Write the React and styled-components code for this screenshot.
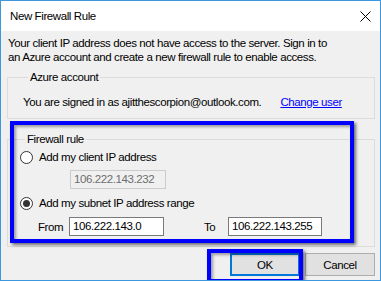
import React from "react"
import styled, { createGlobalStyle } from "styled-components"

const GlobalStyle = createGlobalStyle`
  body {
    margin: 0;
    background: #ffffff;
    font-family: "Liberation Sans", Arial, sans-serif;
    font-size: 11.5px;
    letter-spacing: -0.4px;
    color: #000000;
  }
`

const Window = styled.div`
  position: relative;
  box-sizing: border-box;
  width: 381px;
  height: 281px;
  border: 1px solid #3d97de;
  display: flex;
  flex-direction: column;
  overflow: hidden;
  background: #f0f0f0;
`

const TitleBar = styled.div`
  height: 30px;
  flex: none;
  background: #ffffff;
  display: flex;
  align-items: center;
  justify-content: space-between;
  padding: 0 9px 0 9px;
`

const Title = styled.span`
  line-height: 14px;
`

const Body = styled.div`
  flex: 1;
  display: flex;
  flex-direction: column;
  padding: 5px 5px 0 6px;
  white-space: nowrap;
`

const Message = styled.p`
  margin: 0 0 0 1px;
  line-height: 14px;
`

const Group = styled.fieldset`
  margin: ${p => p.$gap}px 0 0;
  padding: ${p => p.$pad};
  border: 1px solid #dcdcdc;
  min-width: 0;
`

const Legend = styled.legend`
  margin-left: 5px;
  padding: 0 2px;
  line-height: 14px;
`

const SignedRow = styled.div`
  display: flex;
  line-height: 14px;
`

const LinkText = styled.a`
  margin-left: 19px;
  color: #0000ff;
  text-decoration: underline;
  cursor: pointer;
`

const RadioRow = styled.label`
  display: flex;
  align-items: center;
  gap: 6px;
  line-height: 14px;
  margin-top: ${p => p.$gap || 0}px;
`

const Radio = styled.span`
  box-sizing: border-box;
  width: 13px;
  height: 13px;
  border-radius: 50%;
  border: 1px solid #333333;
  background: #ffffff;
  display: flex;
  align-items: center;
  justify-content: center;

  &::after {
    content: "";
    width: 7px;
    height: 7px;
    border-radius: 50%;
    background: #333333;
    display: ${p => (p.$checked ? "block" : "none")};
  }
`

const TextBox = styled.div`
  box-sizing: border-box;
  flex: none;
  width: ${p => p.$w}px;
  height: 19px;
  border: 1px solid ${p => (p.$disabled ? "#cccccc" : "#7a7a7a")};
  background: ${p => (p.$disabled ? "#f0f0f0" : "#ffffff")};
  color: ${p => (p.$disabled ? "#6d6d6d" : "#000000")};
  padding: 0 0 0 3px;
  line-height: 17px;
  margin: ${p => p.$margin || "0"};
`

const RangeRow = styled.div`
  display: flex;
  align-items: center;
  margin: 7px 0 0 18px;
`

const RangeLabel = styled.span`
  width: ${p => p.$w}px;
  flex: none;
  line-height: 14px;
  margin-left: ${p => p.$left || 0}px;
`

const Buttons = styled.div`
  display: flex;
  justify-content: flex-end;
  gap: 5px;
  margin-top: 6px;
`

const Button = styled.button`
  box-sizing: border-box;
  width: 70px;
  height: 23px;
  background: #e1e1e1;
  border: ${p => (p.$default ? "2px solid #0078d7" : "1px solid #adadad")};
  font-family: inherit;
  font-size: 11.5px;
  letter-spacing: inherit;
  color: #000000;
  padding: 0;
`

const Highlight = styled.div`
  position: absolute;
  box-sizing: border-box;
  border: 4px solid #0000ff;
  box-shadow: 2px 2px 3px rgba(0, 0, 0, 0.55), inset 2px 2px 3px rgba(0, 0, 0, 0.35);
  pointer-events: none;
`

const CloseIcon = () => (
  <svg width="11" height="11" viewBox="0 0 11 11">
    <path d="M0.5 0.5 L10.5 10.5 M10.5 0.5 L0.5 10.5" stroke="#000" strokeWidth="1" fill="none" />
  </svg>
)

export default function App() {
  return (
    <>
      <GlobalStyle />
      <Window>
        <TitleBar>
          <Title>New Firewall Rule</Title>
          <CloseIcon />
        </TitleBar>
        <Body>
          <Message>
            Your client IP address does not have access to the server. Sign in to
            <br />
            an Azure account and create a new firewall rule to enable access.
          </Message>
          <Group $gap={6} $pad="11px 0 9px 15px">
            <Legend>Azure account</Legend>
            <SignedRow>
              <span>You are signed in as ajitthescorpion@outlook.com.</span>
              <LinkText>Change user</LinkText>
            </SignedRow>
          </Group>
          <Group $gap={13} $pad="4px 0 10px 12px">
            <Legend>Firewall rule</Legend>
            <RadioRow>
              <Radio />
              Add my client IP address
            </RadioRow>
            <TextBox $disabled $w={96} $margin="6px 0 0 50px">106.222.143.232</TextBox>
            <RadioRow $gap={7}>
              <Radio $checked />
              Add my subnet IP address range
            </RadioRow>
            <RangeRow>
              <RangeLabel $w={31}>From</RangeLabel>
              <TextBox $w={95}>106.222.143.0</TextBox>
              <RangeLabel $w={24} $left={40}>To</RangeLabel>
              <TextBox $w={94}>106.222.143.255</TextBox>
            </RangeRow>
          </Group>
          <Buttons>
            <Button $default>OK</Button>
            <Button>Cancel</Button>
          </Buttons>
        </Body>
        <Highlight style={{ left: 9, top: 120, width: 344, height: 122 }} />
        <Highlight style={{ left: 206, top: 248, width: 96, height: 34 }} />
      </Window>
    </>
  )
}
